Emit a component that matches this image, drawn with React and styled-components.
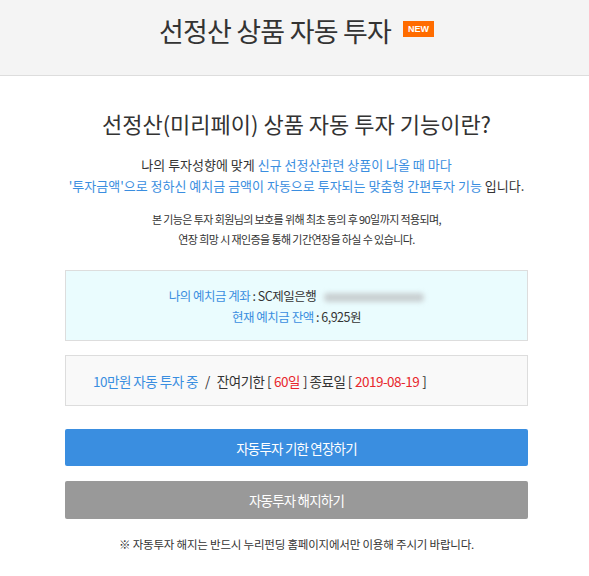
import styled, { createGlobalStyle } from 'styled-components'

const GlobalStyle = createGlobalStyle`
  body {
    margin: 0;
    background: #fff;
    font-family: "Noto Sans CJK KR", "Noto Sans", sans-serif;
    color: #333;
  }
`

const Header = styled.header`
  height: 76px;
  background: #f4f4f4;
  border-bottom: 1px solid #ddd;
  display: flex;
  align-items: flex-start;
  justify-content: center;
  padding: 11px 0 0 4px;
  box-sizing: border-box;
  gap: 12px;
`

const HeaderTitle = styled.h1`
  margin: 0;
  font-size: 27px;
  font-weight: 400;
  color: #333;
  letter-spacing: -0.8px;
  line-height: 40px;
`

const NewBadge = styled.span`
  margin-top: 10px;
  background: #ff6c00;
  color: #fff;
  font-family: "Liberation Sans", Arial, sans-serif;
  font-weight: 700;
  font-size: 9px;
  line-height: 16px;
  height: 16px;
  padding: 0 5px;
`

const Content = styled.main`
  width: 463px;
  margin: 0 auto;
  padding: 31px 0 0 4px;
  display: flex;
  flex-direction: column;
  align-items: stretch;
`

const Heading = styled.h2`
  margin: 0 0 15px;
  text-align: center;
  font-size: 22px;
  font-weight: 400;
  color: #333;
  letter-spacing: 0;
  line-height: 32px;
`

const Intro = styled.p`
  margin: 0 -12px 13px;
  text-align: center;
  font-size: 13px;
  line-height: 21px;
  letter-spacing: 0;
  color: #333;
`

const Blue = styled.span`
  color: #3a8ee0;
`

const Red = styled.span`
  color: #e8262c;
  margin: 0 3px;
`

const Notice = styled.p`
  margin: 0 0 21px;
  text-align: center;
  font-size: 11px;
  line-height: 20px;
  letter-spacing: -0.6px;
  color: #333;
`

const Box = styled.div`
  border: 1px solid #ddd;
  background: ${p => p.$tone === 'cyan' ? '#eafcfe' : '#f9f9f9'};
  box-sizing: border-box;
  font-size: ${p => p.$tone === 'cyan' ? '12.5px' : '13.5px'};
  letter-spacing: -0.5px;
  color: #333;
`

const AccountBox = styled(Box)`
  height: 71px;
  display: flex;
  flex-direction: column;
  align-items: center;
  justify-content: center;
  line-height: 21px;
  margin-bottom: 14px;
`

const StatusBox = styled(Box)`
  height: 51px;
  display: flex;
  align-items: center;
  padding-left: 27px;
  margin-bottom: 23px;
`

const Blurred = styled.span`
  display: inline-block;
  width: 100px;
  height: 9px;
  margin-left: 8px;
  vertical-align: middle;
  background: #c9d0d2;
  border-radius: 4px;
  filter: blur(2.5px);
`

const Slash = styled.span`
  margin: 0 7px;
`

const Button = styled.button`
  display: block;
  width: 100%;
  height: ${p => p.$primary ? '37px' : '38px'};
  border: 0;
  border-radius: 2px;
  background: ${p => p.$primary ? '#3a8ee0' : '#999'};
  color: #fff;
  font-family: inherit;
  font-size: 13.5px;
  letter-spacing: -0.8px;
  margin-bottom: ${p => p.$primary ? '15px' : '17px'};
  cursor: pointer;
`

const FootNote = styled.p`
  margin: 0;
  text-align: center;
  font-size: 11.5px;
  letter-spacing: -0.2px;
  color: #333;
`

export default function App() {
  return (
    <>
      <GlobalStyle />
      <Header>
        <HeaderTitle>선정산 상품 자동 투자</HeaderTitle>
        <NewBadge>NEW</NewBadge>
      </Header>

      <Content>
        <Heading>선정산(미리페이) 상품 자동 투자 기능이란?</Heading>

        <Intro>
          나의 투자성향에 맞게 <Blue>신규 선정산관련 상품이 나올 때 마다</Blue>
          <br />
          <Blue>'투자금액'으로 정하신 예치금 금액이 자동으로 투자되는 맞춤형 간편투자 기능</Blue> 입니다.
        </Intro>

        <Notice>
          본 기능은 투자 회원님의 보호를 위해 최초 동의 후 90일까지 적용되며,
          <br />
          연장 희망 시 재인증을 통해 기간연장을 하실 수 있습니다.
        </Notice>

        <AccountBox $tone="cyan">
          <div>
            <Blue>나의 예치금 계좌</Blue> : SC제일은행<Blurred />
          </div>
          <div>
            <Blue>현재 예치금 잔액</Blue> : 6,925원
          </div>
        </AccountBox>

        <StatusBox>
          <Blue>10만원 자동 투자 중</Blue>
          <Slash>/</Slash>
          잔여기한 [<Red>60일</Red>] 종료일 [<Red>2019-08-19</Red>]
        </StatusBox>

        <Button $primary>자동투자 기한 연장하기</Button>
        <Button>자동투자 해지하기</Button>

        <FootNote>※ 자동투자 해지는 반드시 누리펀딩 홈페이지에서만 이용해 주시기 바랍니다.</FootNote>
      </Content>
    </>
  )
}
